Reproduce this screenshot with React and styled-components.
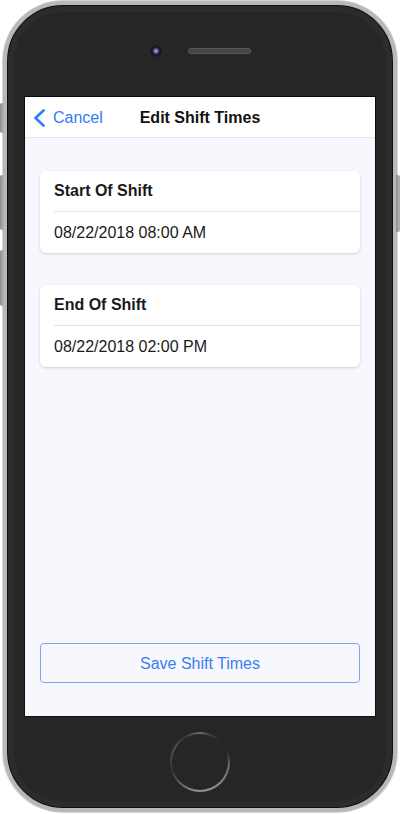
import React from "react"
import styled, { createGlobalStyle } from "styled-components"

const GlobalStyle = createGlobalStyle`
body {
  margin: 0;
  background: #ffffff;
  font-family: "Liberation Sans", Arial, sans-serif;
  overflow: hidden;
}
* { box-sizing: border-box; }
`

const Frame = styled.div`
position: relative;
width: 400px;
height: 814px;
padding: 1px 3px 2px 3px;
`

const SideKey = styled.div`
position: absolute;
width: 4px;
top: ${props => props.top}px;
height: ${props => props.len}px;
${props => props.right ? "right: 0;" : "left: 0;"}
background: linear-gradient(90deg, #8e8e8e, #b4b4b4);
border-radius: ${props => props.right ? "0 2px 2px 0" : "2px 0 0 2px"};
`

const Phone = styled.div`
width: 394px;
height: 811px;
border-radius: 60px;
background: #262626;
border: 4px solid #b8b8b8;
box-shadow: 0 0 0 1px #d6d6d6, inset 0 0 0 1px #0f0f0f, inset 0 0 0 7px #2c2c2c;
display: flex;
flex-direction: column;
align-items: center;
`

const TopArea = styled.div`
height: 92px;
width: 100%;
display: flex;
justify-content: center;
align-items: flex-start;
padding-top: 40px;
gap: 26px;
`

const Camera = styled.div`
width: 12px;
height: 12px;
border-radius: 50%;
background: radial-gradient(circle at 50% 50%, #a89ad0 0 1px, #5d4d90 2px, #3b2f62 3.2px, #141414 4px, #1e1e1e 6px);
visibility: ${props => props.hidden ? "hidden" : "visible"};
`

const Speaker = styled.div`
width: 63px;
height: 6px;
margin-top: 3px;
border-radius: 3px;
background: #4e4e4e;
background-image: radial-gradient(#3a3a3a 0.6px, transparent 0.8px);
background-size: 2px 2px;
box-shadow: inset 0 0 0 1px #575757;
`

const Screen = styled.div`
width: 350px;
height: 619px;
background: #f6f8fd;
box-shadow: 0 0 0 1px #0c0c0c;
display: flex;
flex-direction: column;
`

const NavBar = styled.div`
height: 41px;
padding-top: 2px;
background: #ffffff;
border-bottom: 1px solid #e3e5e8;
display: grid;
grid-template-columns: 1fr auto 1fr;
align-items: center;
`

const BackLink = styled.div`
display: flex;
align-items: center;
gap: 8px;
padding-left: 8px;
color: #2f7cf6;
font-size: 16px;
`

const NavTitle = styled.div`
font-size: 16px;
font-weight: bold;
color: #111;
`

const Content = styled.div`
flex: 1;
display: flex;
flex-direction: column;
gap: 32px;
padding: 33px 15px 33px 15px;
`

const Card = styled.div`
background: #ffffff;
border-radius: 6px;
box-shadow: 0 1px 3px rgba(0, 0, 0, 0.16);
display: flex;
flex-direction: column;
`

const CardRow = styled.div`
height: ${props => props.h}px;
margin-left: 14px;
display: flex;
align-items: center;
font-size: 16px;
color: #1a1a1a;
font-weight: ${props => props.bold ? "bold" : "normal"};
border-bottom: ${props => props.divider ? "1px solid #e4e4e4" : "none"};
`

const SaveButton = styled.button`
margin-top: auto;
height: 40px;
width: 100%;
padding-top: 2px;
background: transparent;
border: 1px solid #7ea6ee;
border-radius: 4px;
color: #3a7ef3;
font-family: "Liberation Sans", Arial, sans-serif;
font-size: 16px;
`

const BottomArea = styled.div`
flex: 1;
width: 100%;
display: flex;
justify-content: center;
align-items: center;
`

const HomeRing = styled.div`
width: 60px;
height: 60px;
border-radius: 50%;
padding: 2px;
background: conic-gradient(from 0deg, #6e6e6e 0deg, #3e3e3e 20deg, #262626 45deg, #2a2a2a 70deg, #6a6a6a 95deg, #8a8a8a 140deg, #8e8e8e 185deg, #5e5e5e 225deg, #333 250deg, #444 275deg, #505050 300deg, #363636 330deg, #6e6e6e 360deg);
`

const HomeFace = styled.div`
width: 100%;
height: 100%;
border-radius: 50%;
background: #262626;
`

const Chevron = () => (
    <svg width="12" height="18" viewBox="0 0 12 18">
        <polyline points="10.5,1.5 2.5,9 10.5,16.5" fill="none" stroke="#2f7cf6" strokeWidth="2.6" strokeLinecap="round" strokeLinejoin="round" />
    </svg>
)

const shifts = [
    { label: "Start Of Shift", value: "08/22/2018 08:00 AM" },
    { label: "End Of Shift", value: "08/22/2018 02:00 PM" },
]

function App() {
    return (
        <Frame>
            <GlobalStyle />
            <SideKey top={103} len={30} />
            <SideKey top={175} len={55} />
            <SideKey top={250} len={56} />
            <SideKey right top={175} len={57} />
            <Phone>
                <TopArea>
                    <Camera />
                    <Speaker />
                    <Camera hidden />
                </TopArea>
                <Screen>
                    <NavBar>
                        <BackLink><Chevron />Cancel</BackLink>
                        <NavTitle>Edit Shift Times</NavTitle>
                        <div />
                    </NavBar>
                    <Content>
                        {shifts.map(s => (
                            <Card key={s.label}>
                                <CardRow h={41} bold divider>{s.label}</CardRow>
                                <CardRow h={41}>{s.value}</CardRow>
                            </Card>
                        ))}
                        <SaveButton>Save Shift Times</SaveButton>
                    </Content>
                </Screen>
                <BottomArea>
                    <HomeRing><HomeFace /></HomeRing>
                </BottomArea>
            </Phone>
        </Frame>
    )
}

export default App
